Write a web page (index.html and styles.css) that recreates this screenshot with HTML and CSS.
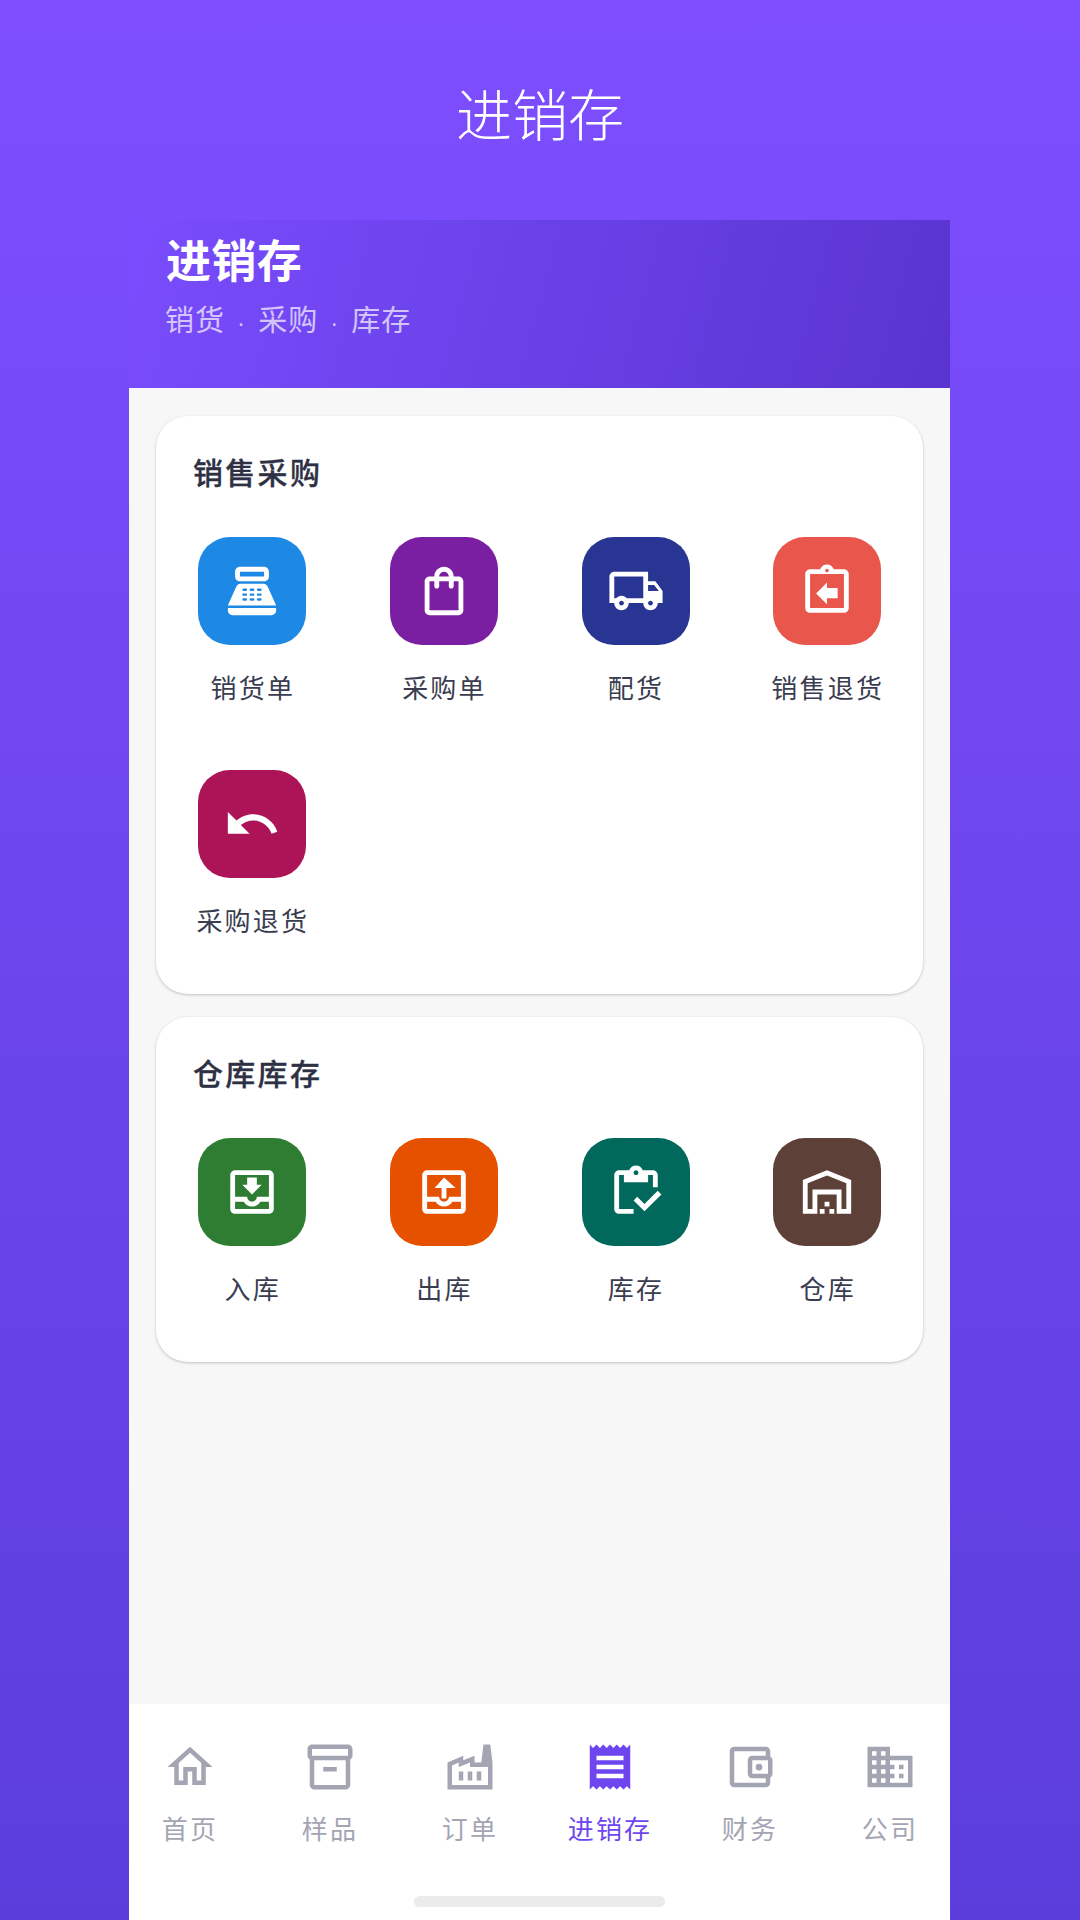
FILE: index.html
```html
<!DOCTYPE html>
<html lang="zh-CN">
<head>
  <meta charset="UTF-8">
  <meta name="viewport" content="width=device-width, initial-scale=1.0">
  <title>进销存</title>
  <link rel="stylesheet" href="styles.css">
</head>
<body>
  <header class="topbar">进销存</header>

  <div class="frame">
    <!-- Banner -->
    <section class="banner">
      <h1>进销存</h1>
      <p>销货 <span class="dot">·</span> 采购 <span class="dot">·</span> 库存</p>
    </section>

    <main class="content">
      <!-- Sales and purchasing -->
      <section class="card">
        <h2>销售采购</h2>
        <div class="grid">
          <div class="item">
            <div class="tile blue"><svg viewBox="0 0 24 24"><path d="M17 2H7c-1.1 0-2 .9-2 2v2c0 1.1.9 2 2 2h10c1.1 0 2-.9 2-2V4c0-1.1-.9-2-2-2zm0 4H7V4h10v2zm3 16H4c-1.1 0-2-.9-2-2v-1h20v1c0 1.1-.9 2-2 2zm-1.47-11.81C18.21 9.47 17.49 9 16.7 9H7.3c-.79 0-1.51.47-1.83 1.19L2 18h20l-3.47-7.81zM9.5 16h-1c-.28 0-.5-.22-.5-.5s.22-.5.5-.5h1c.28 0 .5.22.5.5s-.22.5-.5.5zm0-2h-1c-.28 0-.5-.22-.5-.5s.22-.5.5-.5h1c.28 0 .5.22.5.5s-.22.5-.5.5zm0-2h-1c-.28 0-.5-.22-.5-.5s.22-.5.5-.5h1c.28 0 .5.22.5.5s-.22.5-.5.5zm3 4h-1c-.28 0-.5-.22-.5-.5s.22-.5.5-.5h1c.28 0 .5.22.5.5s-.22.5-.5.5zm0-2h-1c-.28 0-.5-.22-.5-.5s.22-.5.5-.5h1c.28 0 .5.22.5.5s-.22.5-.5.5zm0-2h-1c-.28 0-.5-.22-.5-.5s.22-.5.5-.5h1c.28 0 .5.22.5.5s-.22.5-.5.5zm3 4h-1c-.28 0-.5-.22-.5-.5s.22-.5.5-.5h1c.28 0 .5.22.5.5s-.22.5-.5.5zm0-2h-1c-.28 0-.5-.22-.5-.5s.22-.5.5-.5h1c.28 0 .5.22.5.5s-.22.5-.5.5zm0-2h-1c-.28 0-.5-.22-.5-.5s.22-.5.5-.5h1c.28 0 .5.22.5.5s-.22.5-.5.5z"/></svg></div>
            <span>销货单</span>
          </div>
          <div class="item">
            <div class="tile purple"><svg viewBox="0 0 24 24"><path d="M18 6h-2c0-2.21-1.79-4-4-4S8 3.79 8 6H6c-1.1 0-2 .9-2 2v12c0 1.1.9 2 2 2h12c1.1 0 2-.9 2-2V8c0-1.1-.9-2-2-2zm-6-2c1.1 0 2 .9 2 2h-4c0-1.1.9-2 2-2zm6 16H6V8h2v2c0 .55.45 1 1 1s1-.45 1-1V8h4v2c0 .55.45 1 1 1s1-.45 1-1V8h2v12z"/></svg></div>
            <span>采购单</span>
          </div>
          <div class="item">
            <div class="tile indigo"><svg viewBox="0 0 24 24"><path d="M20 8h-3V4H3c-1.1 0-2 .9-2 2v11h2c0 1.66 1.34 3 3 3s3-1.34 3-3h6c0 1.66 1.34 3 3 3s3-1.34 3-3h2v-5l-3-4zm-.5 1.5l1.96 2.5H17V9.5h2.5zM6 18c-.55 0-1-.45-1-1s.45-1 1-1 1 .45 1 1-.45 1-1 1zm2.22-3c-.55-.61-1.33-1-2.22-1s-1.67.39-2.22 1H3V6h12v9H8.22zM18 18c-.55 0-1-.45-1-1s.45-1 1-1 1 .45 1 1-.45 1-1 1z"/></svg></div>
            <span>配货</span>
          </div>
          <div class="item">
            <div class="tile red"><svg viewBox="0 0 24 24"><path d="M19 3h-4.18C14.4 1.84 13.3 1 12 1c-1.3 0-2.4.84-2.82 2H5c-1.1 0-2 .9-2 2v14c0 1.1.9 2 2 2h14c1.1 0 2-.9 2-2V5c0-1.1-.9-2-2-2zm-7-.25c.41 0 .75.34.75.75s-.34.75-.75.75-.75-.34-.75-.75.34-.75.75-.75zM19 19H5V5h14v14z"/><path d="M12 8.5L7.5 13l4.5 4.5V15h4.4v-4.2H12z"/></svg></div>
            <span>销售退货</span>
          </div>
          <div class="item">
            <div class="tile pink"><svg viewBox="0 0 24 24"><path d="M12.5 8c-2.65 0-5.05.99-6.9 2.6L2 7v9h9l-3.62-3.62c1.39-1.16 3.16-1.88 5.12-1.88 3.54 0 6.55 2.31 7.6 5.5l2.37-.78C21.08 11.03 17.15 8 12.5 8z"/></svg></div>
            <span>采购退货</span>
          </div>
        </div>
      </section>

      <!-- Warehouse and stock -->
      <section class="card">
        <h2>仓库库存</h2>
        <div class="grid">
          <div class="item">
            <div class="tile green"><svg viewBox="0 0 24 24"><path d="M19 3H4.99C3.88 3 3.01 3.9 3.01 5L3 19c0 1.1.88 2 1.99 2H19c1.1 0 2-.9 2-2V5c0-1.1-.9-2-2-2zm0 16H5v-3h3.56c.69 1.19 1.97 2 3.45 2s2.75-.81 3.45-2H19v3zm0-5h-4.99c0 1.1-.9 2-2 2s-2-.9-2-2H5V5h14v9z"/><path d="M16 9h-2V6h-4v3H8l4 4 4-4z"/></svg></div>
            <span>入库</span>
          </div>
          <div class="item">
            <div class="tile orange"><svg viewBox="0 0 24 24"><path d="M11 14.7h2v-4.4h3.8L12 6l-3.9 4.3H11z"/><path d="M19 3H5c-1.1 0-2 .9-2 2v14c0 1.1.9 2 2 2h14c1.1 0 2-.9 2-2V5c0-1.1-.9-2-2-2zm0 16H5v-3h3.56c.69 1.19 1.97 2 3.45 2s2.75-.81 3.45-2H19v3zm0-5h-4.99c0 1.1-.9 2-2 2s-2-.9-2-2H5V5h14v9z"/></svg></div>
            <span>出库</span>
          </div>
          <div class="item">
            <div class="tile teal"><svg viewBox="0 0 24 24"><path d="M5 5h2v3h10V5h2v5h2V5c0-1.1-.9-2-2-2h-4.18C14.4 1.84 13.3 1 12 1S9.6 1.84 9.18 3H5C3.9 3 3 3.9 3 5v14c0 1.1.9 2 2 2h6v-2H5V5zm7-2c.55 0 1 .45 1 1s-.45 1-1 1-1-.45-1-1 .45-1 1-1z"/><path d="M21 11.5L15.51 17l-3.01-3-1.5 1.5 4.51 4.5 7-7z"/></svg></div>
            <span>库存</span>
          </div>
          <div class="item">
            <div class="tile brown"><svg viewBox="0 0 24 24"><path d="M20 8.35V19h-2v-8H6v8H4V8.35l8-3.2 8 3.2zM22 21V7L12 3 2 7v14h6v-8h8v8h6zm-11-2H9v2h2v-2zm2-3h-2v2h2v-2zm2 3h-2v2h2v-2z"/></svg></div>
            <span>仓库</span>
          </div>
        </div>
      </section>
    </main>

    <!-- Bottom navigation -->
    <nav class="tabbar">
      <div class="tabs">
        <div class="tab"><svg viewBox="0 0 24 24"><path d="M12 5.69l5 4.5V18h-2v-6H9v6H7v-7.81l5-4.5M12 3L2 12h3v8h6v-6h2v6h6v-8h3L12 3z"/></svg><span>首页</span></div>
        <div class="tab"><svg viewBox="0 0 24 24"><path d="M20 2H4c-1 0-2 .9-2 2v3.01c0 .72.43 1.34 1 1.69V20c0 1.1 1.1 2 2 2h14c.9 0 2-.9 2-2V8.7c.57-.35 1-.97 1-1.69V4c0-1.1-1-2-2-2zm-1 18H5V9h14v11zm1-13H4V4h16v3z"/><path d="M9 12h6v2H9z"/></svg><span>样品</span></div>
        <div class="tab"><svg viewBox="0 0 24 24"><path d="M22 22H2V10l7-3v2l5-2v3h3l1-8h3l1 8v12zM12 9.95l-5 2V10l-3 1.32V20h16v-8h-8V9.95zM11 18h2v-4h-2v4zm-4 0h2v-4H7v4zm10-4h-2v4h2v-4z"/></svg><span>订单</span></div>
        <div class="tab active"><svg viewBox="0 0 24 24"><path d="M18 17H6v-2h12v2zm0-4H6v-2h12v2zm0-4H6V7h12v2zM3 22l1.5-1.5L6 22l1.5-1.5L9 22l1.5-1.5L12 22l1.5-1.5L15 22l1.5-1.5L18 22l1.5-1.5L21 22V2l-1.5 1.5L18 2l-1.5 1.5L15 2l-1.5 1.5L12 2l-1.5 1.5L9 2 7.5 3.5 6 2 4.5 3.5 3 2v20z"/></svg><span>进销存</span></div>
        <div class="tab"><svg viewBox="0 0 24 24"><path d="M21 7.28V5c0-1.1-.9-2-2-2H5c-1.11 0-2 .9-2 2v14c0 1.1.89 2 2 2h14c1.1 0 2-.9 2-2v-2.28c.59-.35 1-.98 1-1.72V9c0-.74-.41-1.38-1-1.72zM20 9v6h-7V9h7zM5 19V5h14v2h-6c-1.1 0-2 .9-2 2v6c0 1.1.9 2 2 2h6v2H5z"/><circle cx="16" cy="12" r="1.5"/></svg><span>财务</span></div>
        <div class="tab"><svg viewBox="0 0 24 24"><path d="M12 7V3H2v18h20V7H12zM6 19H4v-2h2v2zm0-4H4v-2h2v2zm0-4H4V9h2v2zm0-4H4V5h2v2zm4 12H8v-2h2v2zm0-4H8v-2h2v2zm0-4H8V9h2v2zm0-4H8V5h2v2zm10 12h-8v-2h2v-2h-2v-2h2v-2h-2V9h8v10zm-2-8h-2v2h2v-2zm0 4h-2v2h2v-2z"/></svg><span>公司</span></div>
      </div>
      <div class="home-bar"></div>
    </nav>
  </div>
</body>
</html>
```

FILE: styles.css
```css
* {
  box-sizing: border-box;
}

html,
body {
  height: 100%;
}

body {
  margin: 0;
  height: 1920px;
  overflow: hidden;
  display: flex;
  flex-direction: column;
  align-items: center;
  font-family: "Noto Sans CJK SC", "Noto Sans", sans-serif;
  background: linear-gradient(180deg, #7e4eff 0%, #5b3ddc 100%);
}

.topbar {
  width: 100%;
  height: 220px;
  padding-top: 2px;
  display: flex;
  align-items: center;
  justify-content: center;
  color: #fff;
  font-size: 56px;
  font-weight: 300;
}

.frame {
  width: 821px;
  margin-right: 1px;
  flex: 1;
  display: flex;
  flex-direction: column;
  min-height: 0;
}

.banner {
  height: 168px;
  padding: 10px 36px 0;
  background: linear-gradient(105deg, #7a4cfd 0%, #6b42ea 45%, #5a34cf 100%);
}

.banner h1 {
  margin: 0 0 0 1px;
  height: 58px;
  line-height: 58px;
  font-size: 45px;
  font-weight: 700;
  letter-spacing: 0.4px;
  color: #fff;
}

.banner p {
  margin: 9px 0 0;
  height: 42px;
  line-height: 42px;
  font-size: 29px;
  letter-spacing: 1px;
  color: rgba(255, 255, 255, 0.7);
}

.dot {
  margin: 0 4.6px;
  font-family: "Liberation Sans", sans-serif;
  font-size: 24px;
}

.content {
  flex: 1;
  padding: 28px 27px 0;
  display: flex;
  flex-direction: column;
  gap: 23px;
  background-color: #f7f7f7;
}

.card {
  padding: 34px 0 52px;
  background-color: #fff;
  border-radius: 32px;
  box-shadow: 0 1px 3px rgba(0, 0, 0, 0.22);
}

.card h2 {
  margin: 0 0 45px;
  padding-left: 37px;
  height: 42px;
  line-height: 42px;
  font-size: 30px;
  font-weight: 500;
  -webkit-text-stroke: 0.3px #2e3144;
  letter-spacing: 2.3px;
  color: #2e3144;
}

.grid {
  margin-left: 0.5px;
  display: grid;
  grid-template-columns: repeat(4, 1fr);
  row-gap: 61px;
}

.item {
  display: flex;
  flex-direction: column;
  align-items: center;
}

.item span {
  margin-top: 22px;
  height: 40px;
  margin-bottom: 2px;
  padding-left: 1px;
  line-height: 40px;
  font-size: 26px;
  letter-spacing: 2.2px;
  color: #3a3d50;
}

.tile {
  width: 108px;
  height: 108px;
  display: flex;
  align-items: center;
  justify-content: center;
  border-radius: 32px;
}

.tile svg {
  width: 58px;
  height: 58px;
  fill: #fff;
}

.blue { background-color: #1e88e5; }
.purple { background-color: #7b1fa2; }
.indigo { background-color: #283593; }
.red { background-color: #e8564c; }
.pink { background-color: #ad1457; }
.green { background-color: #2e7d32; }
.orange { background-color: #e65100; }
.teal { background-color: #00695c; }
.brown { background-color: #5d4037; }

.tabbar {
  height: 216px;
  padding-top: 36px;
  display: flex;
  flex-direction: column;
  align-items: center;
  background-color: #fff;
}

.tabs {
  display: grid;
  grid-template-columns: repeat(6, 140px);
  justify-content: center;
  width: 100%;
}

.tab {
  display: flex;
  flex-direction: column;
  align-items: center;
  color: #a3a5b3;
}

.tab svg {
  width: 54px;
  height: 54px;
  fill: currentColor;
}

.tab span {
  margin-top: 14px;
  margin-bottom: 1px;
  padding-left: 1px;
  height: 40px;
  line-height: 40px;
  font-size: 26px;
  letter-spacing: 2.2px;
}

.tab.active {
  color: #6d46f0;
}

.home-bar {
  width: 251px;
  height: 11px;
  margin-top: 47px;
  border-radius: 6px;
  background-color: #ebebeb;
}
```
